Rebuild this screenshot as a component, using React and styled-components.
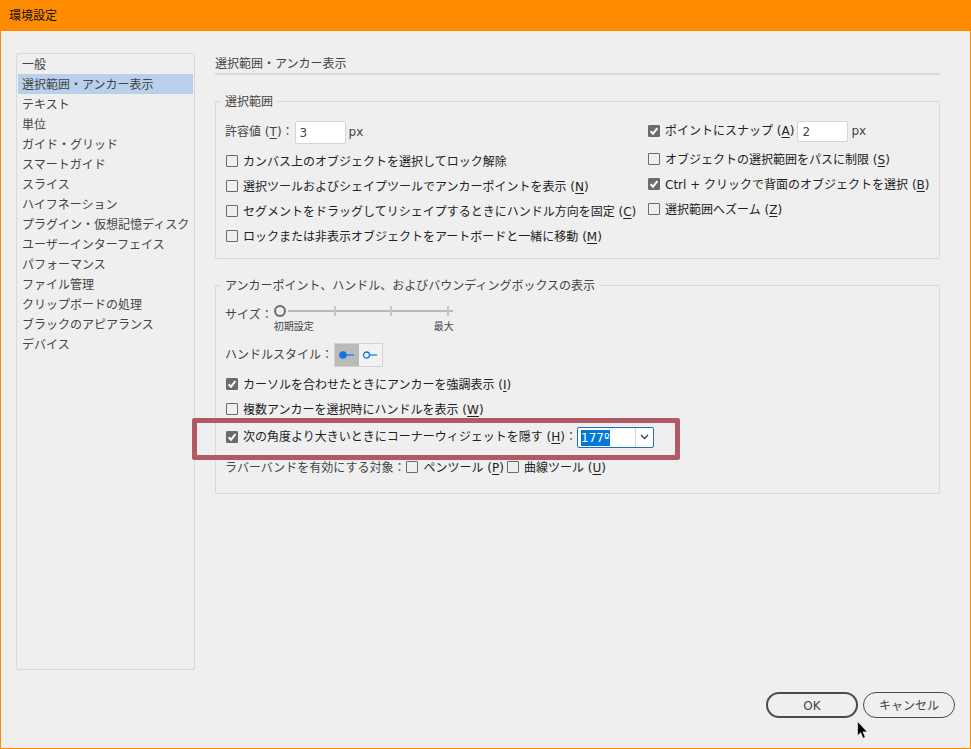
import { useEffect, useRef, useState } from "react";
import styled, { createGlobalStyle, css } from "styled-components";

const GlobalStyle = createGlobalStyle`
  *,
  *::before,
  *::after {
    box-sizing: border-box;
  }

  body {
    margin: 0;
    background: #efefef;
  }

  body,
  button,
  input {
    font-family: "DejaVu Sans", "Noto Sans CJK JP", sans-serif;
    font-size: 12px;
    line-height: 20px;
    color: #444;
  }
`;

const Dialog = styled.div`
  position: relative;
  display: flex;
  flex-direction: column;
  min-height: 100vh;
  background: #efefef;
  border: 1px solid #ff8c00;
`;

const TitleBar = styled.header`
  padding: 5px 8px;
  background: #ff8c00;
  color: #111;
`;

const Content = styled.div`
  flex: 1;
  display: grid;
  grid-template-columns: 179px 1fr;
  column-gap: 20px;
  padding: 22px 30px 22px 15px;
`;

const Sidebar = styled.nav`
  display: flex;
  flex-direction: column;
  padding: 0 1px;
  border: 1px solid #d9d9d9;
  border-radius: 2px;
`;

const SidebarItem = styled.button`
  height: 20px;
  padding: 2px 4px 0;
  border: none;
  background: ${(props) => (props.$active ? "#b8d0eb" : "transparent")};
  text-align: left;
  line-height: 18px;
  white-space: nowrap;
`;

const Main = styled.main`
  display: flex;
  flex-direction: column;
  gap: 16px;
`;

const Heading = styled.h1`
  margin: 0;
  padding-top: 2px;
  border-bottom: 2px solid #d9d9d9;
  font-size: 12px;
  font-weight: 400;
  line-height: 18px;
`;

const Group = styled.fieldset`
  min-width: 0;
  margin: 0;
  padding: 0 9px 9px;
  border: 1px solid #d9d9d9;
  border-radius: 2px;
`;

const Legend = styled.legend`
  margin-left: -4px;
  padding: 2px 4px 0;
  line-height: 18px;
`;

const Columns = styled.div`
  display: grid;
  grid-template-columns: 1fr 283px;
  padding-top: 9px;
`;

const Stack = styled.div`
  display: flex;
  flex-direction: column;
  align-items: flex-start;
`;

const Row = styled.div`
  display: flex;
  align-items: center;
  height: 25px;
  white-space: nowrap;
`;

const FieldRow = styled(Row)`
  height: ${(props) => (props.$compact ? "22px" : "24px")};
  margin-bottom: 5px;
`;

const Key = styled.span`
  text-decoration: underline;
  text-decoration-thickness: 1px;
  text-underline-offset: 2px;
`;

const NumberInput = styled.input`
  width: 51px;
  height: ${(props) => (props.$compact ? "21px" : "23px")};
  margin-left: ${(props) => (props.$compact ? "3px" : "1px")};
  margin-right: 3px;
  padding: 2px 4px 0;
  border: 1px solid #d5d5d5;
  border-radius: 2px;
  background: #fff;
`;

const CheckLabel = styled.label`
  display: flex;
  align-items: center;
  gap: 5px;
  padding-left: 1px;
  color: #222;
`;

const CheckWrap = styled.span`
  display: grid;
  width: 12px;
  height: 12px;
  margin-bottom: 1px;

  & > * {
    grid-area: 1 / 1;
  }

  svg {
    pointer-events: none;
  }
`;

const CheckInput = styled.input`
  appearance: none;
  width: 12px;
  height: 12px;
  margin: 0;
  border: 1px solid #6b6b6b;
  border-radius: 1px;

  &:checked {
    background: #6b6b6b;
  }
`;

const SliderRow = styled.div`
  display: flex;
  align-items: flex-start;
  padding: 6px 0 10px;
`;

const SliderLabel = styled.label`
  line-height: 28px;
`;

const Slider = styled.div`
  width: 180px;
  margin-left: 1px;
`;

const thumb = css`
  appearance: none;
  width: 12px;
  height: 12px;
  border: 2px solid #6b6b6b;
  border-radius: 50%;
  background: #efefef;
  box-shadow: 0 0 0 2px #efefef;
`;

const tick = "linear-gradient(#c4c4c4, #c4c4c4)";

const Range = styled.input`
  appearance: none;
  display: block;
  width: 100%;
  height: 20px;
  margin: 0;
  outline: none;
  background-color: transparent;
  background-image: ${tick}, ${tick}, ${tick},
    linear-gradient(#b9b9b9, #b9b9b9);
  background-repeat: no-repeat;
  background-size: 2px 10px, 2px 10px, 2px 10px, 173px 2px;
  background-position: 60px 5px, 116px 5px, 173px 5px, 6px 9px;

  &::-webkit-slider-thumb {
    ${thumb}
  }

  &::-moz-range-thumb {
    ${thumb}
  }
`;

const SliderCaptions = styled.div`
  display: flex;
  justify-content: space-between;
  height: 12px;
  font-size: 10px;
  line-height: 12px;
`;

const StyleRow = styled(Row)`
  height: 24px;
  margin-bottom: 5px;
`;

const Segmented = styled.div`
  display: flex;
  width: 49px;
  height: 24px;
  margin-left: 1px;
  border: 1px solid #d2d2d2;
`;

const Segment = styled.button`
  flex: 1;
  display: flex;
  align-items: center;
  justify-content: center;
  padding: 0;
  border: none;
  background: ${(props) => (props.$active ? "#bababa" : "#f2f2f2")};
`;

const MarkedRow = styled(Row)`
  position: relative;
  height: 24px;
  margin: 3px 0 6px;

  /* red frame that calls attention to this setting */
  &::after {
    content: "";
    position: absolute;
    inset: -7px -26px -11px -33px;
    border: 5px solid #b05a63;
    border-radius: 2px;
    pointer-events: none;
  }
`;

const Combo = styled.div`
  display: flex;
  width: 77px;
  height: 21px;
  border: 1px solid #1f6fc0;
  border-radius: 2px;
  background: #fff;
`;

const ComboInput = styled.input`
  flex: 1;
  min-width: 0;
  padding: 2px 3px 0;
  border: none;
  outline: none;
  background: transparent;
  line-height: 16px;

  &::selection {
    background: #0078d7;
    color: #fff;
  }
`;

const ComboButton = styled.button`
  display: flex;
  align-items: center;
  justify-content: center;
  width: 18px;
  padding: 0;
  border: none;
  border-left: 1px solid #d5d5d5;
  background: transparent;
`;

const Footer = styled.footer`
  display: flex;
  justify-content: flex-end;
  gap: 5px;
  padding: 0 15px 30px;
`;

const PillButton = styled.button`
  width: 92px;
  height: 26px;
  padding: 2px 0 0;
  border: ${(props) => (props.$primary ? "2px" : "1px")} solid #4b4b4b;
  border-radius: 13px;
  background: transparent;
`;

const Pointer = styled.svg`
  position: absolute;
  right: 101px;
  bottom: 8px;
  pointer-events: none;
`;

const categories = [
  "一般",
  "選択範囲・アンカー表示",
  "テキスト",
  "単位",
  "ガイド・グリッド",
  "スマートガイド",
  "スライス",
  "ハイフネーション",
  "プラグイン・仮想記憶ディスク",
  "ユーザーインターフェイス",
  "パフォーマンス",
  "ファイル管理",
  "クリップボードの処理",
  "ブラックのアピアランス",
  "デバイス",
];

function Mnemonic({ children }) {
  return (
    <span>
      {" "}
      (<Key>{children}</Key>)
    </span>
  );
}

function Checkbox({ label, mnemonic, defaultChecked = false }) {
  const [checked, setChecked] = useState(defaultChecked);

  return (
    <CheckLabel>
      <CheckWrap>
        <CheckInput
          type="checkbox"
          checked={checked}
          onChange={(e) => setChecked(e.target.checked)}
        />
        {checked && (
          <svg width="12" height="12" viewBox="0 0 12 12" fill="none">
            <path d="M2.6 6.2 5 8.7 9.4 3.2" stroke="#fff" strokeWidth="2" />
          </svg>
        )}
      </CheckWrap>
      <span>
        {label}
        {mnemonic && <Mnemonic>{mnemonic}</Mnemonic>}
      </span>
    </CheckLabel>
  );
}

function AngleCombo() {
  const inputRef = useRef(null);

  useEffect(() => {
    inputRef.current.focus();
    inputRef.current.select();
  }, []);

  return (
    <Combo>
      <ComboInput ref={inputRef} id="angle" defaultValue="177º" />
      <ComboButton type="button" aria-label="角度の一覧">
        <svg width="9" height="6" viewBox="0 0 9 6" fill="none">
          <path d="M1 1 4.5 4.4 8 1" stroke="#444" strokeWidth="1.4" />
        </svg>
      </ComboButton>
    </Combo>
  );
}

function SelectionGroup() {
  return (
    <Group>
      <Legend>選択範囲</Legend>
      <Columns>
        <Stack>
          <FieldRow>
            <label htmlFor="tolerance">
              許容値<Mnemonic>T</Mnemonic>：
            </label>
            <NumberInput id="tolerance" defaultValue="3" />
            px
          </FieldRow>
          <Row>
            <Checkbox label="カンバス上のオブジェクトを選択してロック解除" />
          </Row>
          <Row>
            <Checkbox
              label="選択ツールおよびシェイプツールでアンカーポイントを表示"
              mnemonic="N"
            />
          </Row>
          <Row>
            <Checkbox
              label="セグメントをドラッグしてリシェイプするときにハンドル方向を固定"
              mnemonic="C"
            />
          </Row>
          <Row>
            <Checkbox
              label="ロックまたは非表示オブジェクトをアートボードと一緒に移動"
              mnemonic="M"
            />
          </Row>
        </Stack>
        <Stack>
          <FieldRow $compact>
            <Checkbox label="ポイントにスナップ" mnemonic="A" defaultChecked />
            <NumberInput
              $compact
              aria-label="ポイントにスナップ"
              defaultValue="2"
            />
            px
          </FieldRow>
          <Row>
            <Checkbox
              label="オブジェクトの選択範囲をパスに制限"
              mnemonic="S"
            />
          </Row>
          <Row>
            <Checkbox
              label="Ctrl + クリックで背面のオブジェクトを選択"
              mnemonic="B"
              defaultChecked
            />
          </Row>
          <Row>
            <Checkbox label="選択範囲へズーム" mnemonic="Z" />
          </Row>
        </Stack>
      </Columns>
    </Group>
  );
}

const DisplayGroup = styled(Group)`
  padding-bottom: 13px;
`;

const ToolChecks = styled.div`
  display: flex;
  gap: 2px;
`;

function AnchorDisplayGroup() {
  const [handleStyle, setHandleStyle] = useState("solid");

  return (
    <DisplayGroup>
      <Legend>アンカーポイント、ハンドル、およびバウンディングボックスの表示</Legend>
      <Stack>
        <SliderRow>
          <SliderLabel htmlFor="size">サイズ：</SliderLabel>
          <Slider>
            <Range id="size" type="range" min="0" max="3" defaultValue="0" />
            <SliderCaptions>
              <span>初期設定</span>
              <span>最大</span>
            </SliderCaptions>
          </Slider>
        </SliderRow>
        <StyleRow>
          ハンドルスタイル：
          <Segmented role="group" aria-label="ハンドルスタイル">
            <Segment
              type="button"
              aria-label="塗りつぶし"
              $active={handleStyle === "solid"}
              onClick={() => setHandleStyle("solid")}
            >
              <svg width="16" height="10" viewBox="0 0 16 10">
                <circle cx="4" cy="5" r="3.8" fill="#1473e6" />
                <path d="M7 5h8" stroke="#1473e6" strokeWidth="1.2" />
              </svg>
            </Segment>
            <Segment
              type="button"
              aria-label="白抜き"
              $active={handleStyle === "hollow"}
              onClick={() => setHandleStyle("hollow")}
            >
              <svg width="16" height="10" viewBox="0 0 16 10" fill="none">
                <circle
                  cx="4.5"
                  cy="5"
                  r="3"
                  stroke="#1473e6"
                  strokeWidth="1.3"
                />
                <path d="M7.5 5H15" stroke="#1473e6" strokeWidth="1.2" />
              </svg>
            </Segment>
          </Segmented>
        </StyleRow>
        <Row>
          <Checkbox
            label="カーソルを合わせたときにアンカーを強調表示"
            mnemonic="I"
            defaultChecked
          />
        </Row>
        <Row>
          <Checkbox
            label="複数アンカーを選択時にハンドルを表示"
            mnemonic="W"
          />
        </Row>
        <MarkedRow>
          <Checkbox
            label="次の角度より大きいときにコーナーウィジェットを隠す"
            mnemonic="H"
            defaultChecked
          />
          <label htmlFor="angle">：</label>
          <AngleCombo />
        </MarkedRow>
        <Row>
          ラバーバンドを有効にする対象：
          <ToolChecks>
            <Checkbox label="ペンツール" mnemonic="P" />
            <Checkbox label="曲線ツール" mnemonic="U" />
          </ToolChecks>
        </Row>
      </Stack>
    </DisplayGroup>
  );
}

function App() {
  const [active, setActive] = useState("選択範囲・アンカー表示");

  return (
    <>
      <GlobalStyle />
      <Dialog role="dialog" aria-label="環境設定">
        <TitleBar>環境設定</TitleBar>
        <Content>
          <Sidebar>
            {categories.map((name) => (
              <SidebarItem
                key={name}
                type="button"
                $active={name === active}
                onClick={() => setActive(name)}
              >
                {name}
              </SidebarItem>
            ))}
          </Sidebar>
          <Main>
            <Heading>選択範囲・アンカー表示</Heading>
            <SelectionGroup />
            <AnchorDisplayGroup />
          </Main>
        </Content>
        <Footer>
          <PillButton type="button" $primary>
            OK
          </PillButton>
          <PillButton type="button">キャンセル</PillButton>
        </Footer>
        <Pointer width="12" height="19" viewBox="0 0 12 19" aria-hidden="true">
          <path
            d="M.5.5v14.2l3.2-3 2.3 5.6 2.3-1-2.3-5.4h4.3z"
            fill="#000"
            stroke="#fff"
            strokeWidth=".6"
          />
        </Pointer>
      </Dialog>
    </>
  );
}

export default App;
